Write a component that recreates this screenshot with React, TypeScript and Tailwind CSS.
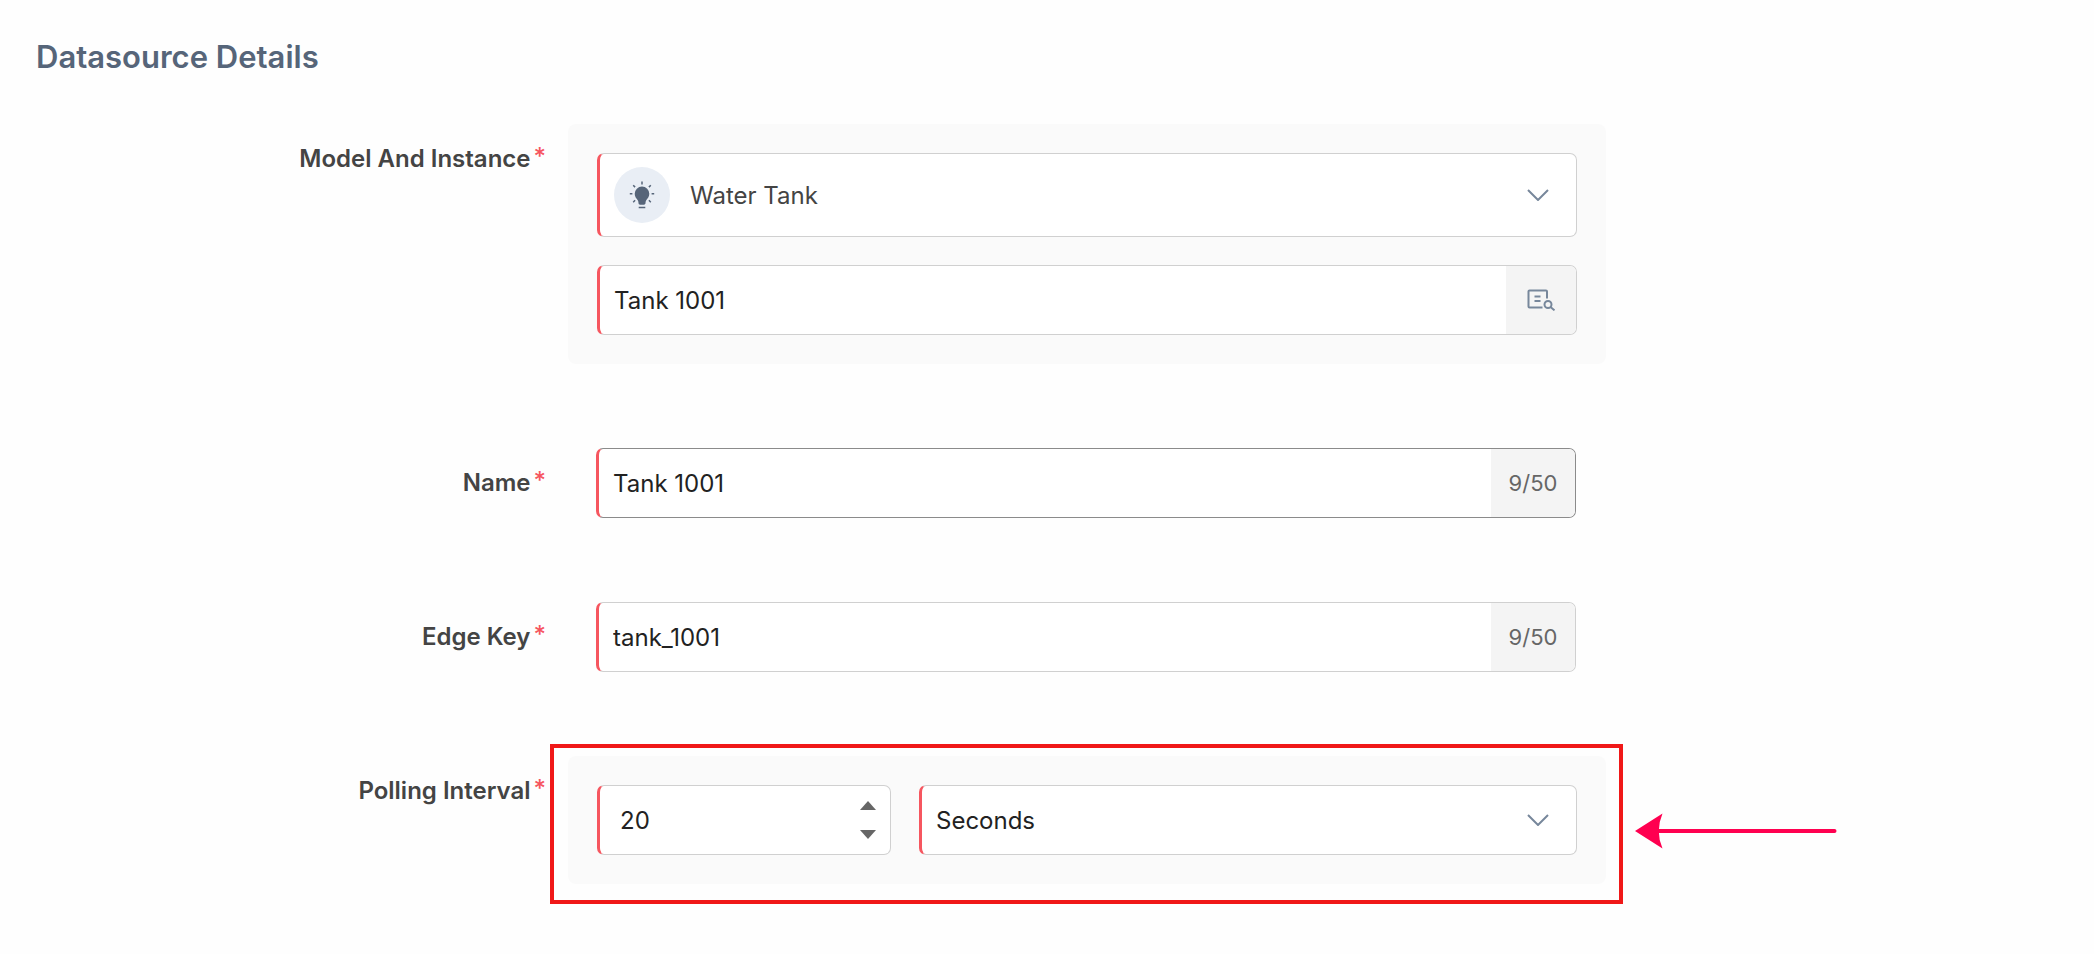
import { useState } from "react";
import type { ReactNode } from "react";

const FIELD = "flex overflow-hidden rounded-[7px] border border-l-[3px] border-l-[#f6565f] bg-white";
const TEXT = "min-w-0 flex-1 bg-transparent pt-px pl-[14px] text-[24px] text-[#222] outline-none";

function Row({
  id,
  label,
  children,
  aside,
}: {
  id: string;
  label: string;
  children: ReactNode;
  aside?: ReactNode;
}) {
  return (
    <div className="grid grid-cols-[546fr_1038fr_466fr] gap-x-[22px]">
      <label htmlFor={id} className="text-right text-[24px] leading-[70px] font-semibold whitespace-nowrap text-[#444]">
        {label}
        <span className="ml-[3px] inline-block align-top text-[24px] leading-[66px] font-medium text-[#f6565f]">*</span>
      </label>
      {children}
      {aside}
    </div>
  );
}

function Chevron() {
  return (
    <svg
      className="pointer-events-none absolute top-1/2 right-[27px] -translate-y-1/2"
      width="22"
      height="12"
      viewBox="0 0 22 12"
      fill="none"
      stroke="#77879b"
      strokeWidth="2"
    >
      <path d="M1 1l10 10L21 1" />
    </svg>
  );
}

function BulbIcon() {
  return (
    <svg width="26" height="28" viewBox="0 0 26 28" fill="#566579">
      <path d="M13 5.5a7.3 7.3 0 0 0-7.3 7.3c0 3 1.7 4.7 2.9 6.3.7 1 .9 2 .9 3 0 1 .7 1.700 1.600 1.700h3.800c.9 0 1.600-.7 1.600-1.700 0-1 .2-2 .9-3 1.200-1.600 2.900-3.300 2.900-6.300A7.300 7.300 0 0 0 13 5.500z" />
      <path d="M9.7 26.5h6.600" stroke="#566579" strokeWidth="1.6" />
      <path
        d="M13 .5v3M4.200 4.200l1.900 1.900M21.800 4.200l-1.900 1.900M.8 12.700h2.600M22.600 12.700h2.600M4.200 21.200l1.900-1.900M21.800 21.200l-1.900-1.900"
        stroke="#566579"
        strokeWidth="1.5"
      />
    </svg>
  );
}

function LookupIcon() {
  return (
    <svg width="28" height="22" viewBox="0 0 28 22" fill="none" stroke="#77879b" strokeWidth="2">
      <path d="M15.5 18.500H2.500a1 1 0 0 1-1-1v-15a1 1 0 0 1 1-1h16.500a1 1 0 0 1 1 1v7" />
      <path d="M7.5 7.500h6M7.500 12h6" />
      <circle cx="21" cy="15.5" r="3.5" />
      <path d="M23.5 18l4 3.300" />
    </svg>
  );
}

function CountedInput({
  id,
  value,
  onChange,
  active,
}: {
  id: string;
  value: string;
  onChange: (value: string) => void;
  active?: boolean;
}) {
  return (
    <div className="pr-[30px] pl-7">
      <div className={`${FIELD} h-[70px] ${active ? "border-y-[#8b8b8b] border-r-[#8b8b8b]" : "border-y-[#d0d0d0] border-r-[#d0d0d0]"}`}>
        <input id={id} className={TEXT} value={value} maxLength={50} onChange={(e) => onChange(e.target.value)} />
        <span className="flex w-[84px] items-center justify-center bg-[#f4f4f4] text-[22px] text-[#666]">
          {value.length}/50
        </span>
      </div>
    </div>
  );
}

export default function App() {
  const [instance, setInstance] = useState("Tank 1001");
  const [name, setName] = useState("Tank 1001");
  const [edgeKey, setEdgeKey] = useState("tank_1001");
  const [interval, setInterval] = useState(20);

  return (
    <main className="min-h-screen bg-[#fefefe] pb-[70px] font-['Inter',sans-serif]">
      <h1 className="px-9 pt-9 text-[31px] leading-[42px] font-semibold text-[#566579]">Datasource Details</h1>

      <form className="mt-[46px] flex flex-col gap-[84px]" onSubmit={(e) => e.preventDefault()}>
        <Row id="model" label="Model And Instance">
          <div className="flex flex-col gap-7 rounded-lg bg-[#fafafa] p-[29px]">
            <div className={`${FIELD} relative h-[84px] items-center border-y-[#d0d0d0] border-r-[#d0d0d0]`}>
              <span className="ml-[14px] flex size-14 items-center justify-center rounded-full bg-[#e9eef5]">
                <BulbIcon />
              </span>
              <select
                id="model"
                className="h-full min-w-0 flex-1 appearance-none bg-transparent pt-px pl-5 text-[24px] text-[#444] outline-none"
              >
                <option>Water Tank</option>
              </select>
              <Chevron />
            </div>
            <div className={`${FIELD} h-[70px] border-y-[#d0d0d0] border-r-[#d0d0d0]`}>
              <input
                aria-label="Instance"
                className={TEXT}
                value={instance}
                onChange={(e) => setInstance(e.target.value)}
              />
              <button type="button" aria-label="Look up" className="flex w-[70px] items-center justify-center bg-[#f4f4f4]">
                <LookupIcon />
              </button>
            </div>
          </div>
        </Row>

        <Row id="name" label="Name">
          <CountedInput id="name" value={name} onChange={setName} active />
        </Row>

        <Row id="edge-key" label="Edge Key">
          <CountedInput id="edge-key" value={edgeKey} onChange={setEdgeKey} />
        </Row>

        <Row
          id="interval"
          label="Polling Interval"
          aside={
            <svg className="mt-14 ml-[7px]" width="202" height="37" viewBox="0 0 202 37" fill="#ff0050">
              <path d="M0 19L27.500 1.500Q20 19 27.500 36.500z" />
              <path d="M22 19H199.500" stroke="#ff0050" strokeWidth="4" strokeLinecap="round" />
            </svg>
          }
        >
          <div className="relative flex gap-7 rounded-lg bg-[#fafafa] p-[29px]">
            <div className={`${FIELD} h-[70px] w-[30%] border-y-[#d0d0d0] border-r-[#d0d0d0]`}>
              <input
                id="interval"
                inputMode="numeric"
                className="min-w-0 flex-1 bg-transparent pt-px pl-5 text-[24px] text-[#222] outline-none"
                value={interval}
                onChange={(e) => setInterval(Number(e.target.value) || 0)}
              />
              <div className="flex w-11 flex-col items-center justify-center gap-5">
                <button type="button" aria-label="Increase" onClick={() => setInterval(interval + 1)}>
                  <svg className="block" width="16" height="9" viewBox="0 0 16 9" fill="#666">
                    <path d="M8 0l8 9H0z" />
                  </svg>
                </button>
                <button type="button" aria-label="Decrease" onClick={() => setInterval(Math.max(0, interval - 1))}>
                  <svg className="block" width="16" height="9" viewBox="0 0 16 9" fill="#666">
                    <path d="M8 9l8-9H0z" />
                  </svg>
                </button>
              </div>
            </div>
            <div className={`${FIELD} relative h-[70px] flex-1 border-y-[#d0d0d0] border-r-[#d0d0d0]`}>
              <select aria-label="Unit" className={`${TEXT} appearance-none`}>
                <option>Seconds</option>
              </select>
              <Chevron />
            </div>
            <div className="pointer-events-none absolute -top-3 -right-[17px] -bottom-5 -left-[18px] border-4 border-[#f01818]" />
          </div>
        </Row>
      </form>
    </main>
  );
}
